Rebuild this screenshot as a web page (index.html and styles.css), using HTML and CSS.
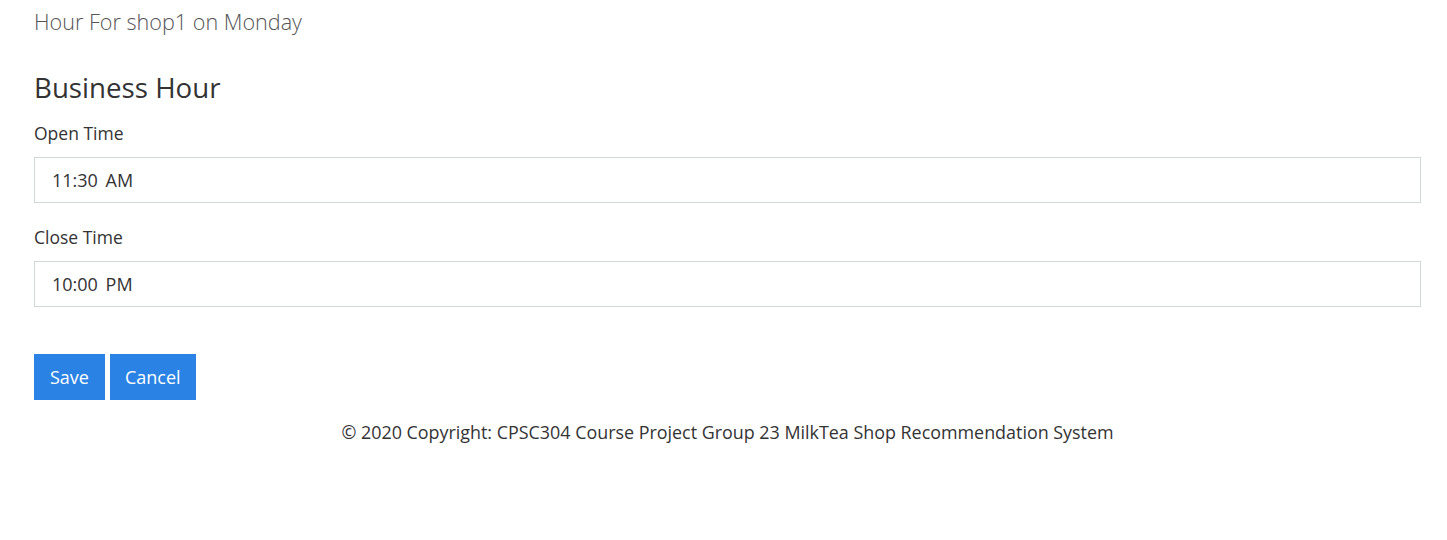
FILE: index.html
```html
<!DOCTYPE html>
<html>
<head>
<meta charset="utf-8">
<link rel="stylesheet" href="styles.css">
</head>
<body>
<div class="page">
  <h4 class="page-title">Hour For shop1 on Monday</h4>
  <form class="hours-form">
    <h3 class="section-title">Business Hour</h3>
    <div class="field">
      <label class="field-label">Open Time</label>
      <div class="field-input">11:30 AM</div>
    </div>
    <div class="field">
      <label class="field-label">Close Time</label>
      <div class="field-input">10:00 PM</div>
    </div>
    <div class="actions">
      <button type="button" class="btn btn-save">Save</button>
      <button type="button" class="btn">Cancel</button>
    </div>
  </form>
  <footer class="footer">© 2020 Copyright: CPSC304 Course Project Group 23 MilkTea Shop Recommendation System</footer>
</div>
</body>
</html>
```
FILE: styles.css
```css
html, body {
  margin: 0;
  padding: 0;
  background: #ffffff;
}
body {
  font-family: "Open Sans", "Noto Sans", sans-serif;
  color: #333333;
  font-size: 18px;
}
.page {
  padding: 8px 26px 0 34px;
}
.page-title {
  margin: 0;
  font-size: 21.6px;
  font-weight: 300;
  line-height: 28px;
  color: #555555;
}
.hours-form {
  margin-top: 33px;
}
.section-title {
  margin: 0;
  font-size: 27.7px;
  font-weight: 400;
  line-height: 36px;
  color: #333333;
}
.field {
  display: flex;
  flex-direction: column;
}
.field-label {
  margin-top: 16px;
  font-size: 17.5px;
  line-height: 24px;
  color: #333333;
}
.field + .field .field-label {
  margin-top: 22px;
}
.field-input {
  margin-top: 12px;
  height: 44px;
  border: 1px solid #d2d6db;
  padding: 0 17px;
  display: flex;
  align-items: center;
  font-size: 18px;
  word-spacing: 3px;
  color: #333333;
}
.actions {
  display: flex;
  gap: 5px;
  margin-top: 47px;
}
.btn {
  height: 46px;
  border: none;
  border-radius: 0;
  background: #2a82e4;
  color: #ffffff;
  font-family: inherit;
  font-size: 18px;
  padding: 0 15px;
}
.btn-save {
  padding: 0 16px;
}
.footer {
  text-align: center;
  margin-top: 20px;
  line-height: 24px;
  font-size: 17.9px;
  color: #333333;
}
```
